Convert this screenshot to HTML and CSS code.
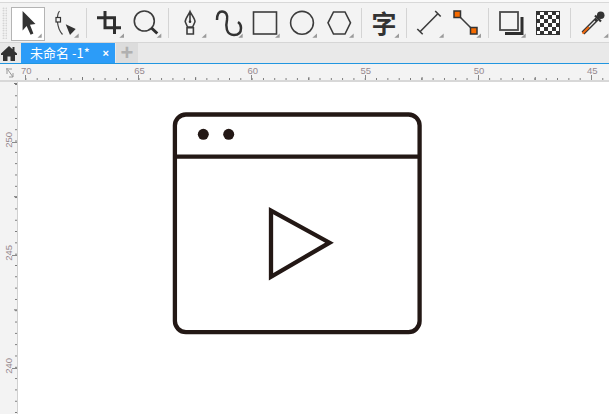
FILE: index.html
```html
<!DOCTYPE html>
<html lang="zh">
<head>
<meta charset="utf-8">
<title>未命名 -1</title>
<link rel="stylesheet" href="styles.css">
</head>
<body>
<div class="app">
  <div class="toolbar">
    <div class="grip"></div>
    <div class="tool tool-active">
      <svg viewBox="8 4 37 36"><path class="fill" d="M22.6 11V30.5L26.6 26L30.6 34.8L33.4 33.4L30 24.8L35.5 24Z"/><path class="tri" d="M37.5 37.7H41.7V33.5Z"/></svg>
    </div>
    <div class="tool">
      <svg viewBox="45 4 37 36"><path class="thin" d="M59.5 11C56.5 15 56 27 62.5 34.5"/><rect class="node" x="56" y="17.5" width="4.5" height="4.5"/><path class="fill" d="M65.7 24.3L75.7 29L70 35Z"/><path class="tri" d="M74 37.7H78.7V33.5Z"/></svg>
    </div>
    <div class="sep"></div>
    <div class="tool">
      <svg viewBox="90 4 37 36"><path class="bold" d="M97 17.8H114.5V34M105 11V27.8H121"/><path class="tri" d="M119.3 37.7H124V33.5Z"/></svg>
    </div>
    <div class="tool">
      <svg viewBox="127 4 37 36"><circle class="line" cx="144.3" cy="21" r="10"/><path class="bold" d="M151.5 28L157.3 33.5"/><path class="tri" d="M156.7 37.7H161.3V33.5Z"/></svg>
    </div>
    <div class="sep"></div>
    <div class="tool">
      <svg viewBox="172 4 37 36"><path class="line" d="M190 11.5C188.5 15 185.2 18.5 185.2 21.7L187.5 27H192.7L195 21.7C195 18.5 191.5 15 190 11.5ZM190 13V21M187 27.7H193.4V34H187Z"/><circle class="fill" cx="190" cy="21.8" r="1.3"/><path class="tri" d="M201.7 37.7H206.3V33.5Z"/></svg>
    </div>
    <div class="tool">
      <svg viewBox="209 4 37 36"><path class="curve" d="M217 20C217 14 219 11.5 222 11.5C226 11.5 228 15 227 20C225.5 26 226 35 234 35C239 35 241 32 241 28C241 25 239.5 23 238 22"/><path class="tri" d="M238.3 37.7H242.7V33.5Z"/></svg>
    </div>
    <div class="tool">
      <svg viewBox="246 4 37 36"><rect class="line" x="253.5" y="12" width="23" height="22"/><path class="tri" d="M275 37.7H279.7V33.5Z"/></svg>
    </div>
    <div class="tool">
      <svg viewBox="283 4 37 36"><circle class="line" cx="302" cy="22.8" r="11.4"/><path class="tri" d="M312.3 37.7H317V33.5Z"/></svg>
    </div>
    <div class="tool">
      <svg viewBox="320 4 37 36"><path class="line" d="M333.5 12H345L350.5 22.8L345 34H333.5L328 22.8Z"/><path class="tri" d="M349 37.7H353.7V33.5Z"/></svg>
    </div>
    <div class="sep"></div>
    <div class="tool tool-text">
      <span class="glyph">字</span>
      <svg class="over" viewBox="365 4 37 36"><path class="tri" d="M394.3 37.7H399V33.5Z"/></svg>
    </div>
    <div class="sep"></div>
    <div class="tool">
      <svg viewBox="410 4 37 36"><path class="line" d="M420 31.7L438.3 13.3M417.3 29L422.7 34.3M435.2 11L440.7 16.5"/><path class="tri" d="M439 37.7H443.7V33.5Z"/></svg>
    </div>
    <div class="tool">
      <svg viewBox="447 4 37 36"><path class="line" d="M458 15L474 31"/><rect class="handle" x="454" y="11" width="6.5" height="6.5"/><rect class="handle" x="470.5" y="27.5" width="6.5" height="6.5"/><path class="tri" d="M476.3 37.7H481V33.5Z"/></svg>
    </div>
    <div class="sep"></div>
    <div class="tool">
      <svg viewBox="492 4 37 36"><rect class="box" x="500" y="12" width="18" height="18"/><path class="bold" d="M505 33.5H522V17"/><path class="tri" d="M521 37.7H525.7V33.5Z"/></svg>
    </div>
    <div class="tool">
      <svg viewBox="529 4 37 36">
        <defs><pattern id="check" x="536" y="11" width="8" height="8" patternUnits="userSpaceOnUse"><rect width="8" height="8" fill="#333"/><rect x="4" width="4" height="4" fill="#fff"/><rect y="4" width="4" height="4" fill="#fff"/></pattern></defs>
        <rect class="frame" x="536.5" y="11.5" width="23" height="23" fill="url(#check)"/>
      </svg>
    </div>
    <div class="sep"></div>
    <div class="tool">
      <svg viewBox="574 4 37 36"><path class="dropper" d="M583 33L597 19"/><path class="tip" d="M582.5 33.5L589 27"/><path class="core" d="M589 27L595 21"/><circle class="fill" cx="600.7" cy="15.2" r="3.8"/><path class="mid" d="M595 15.5L601 21.5"/><path class="tri" d="M603.5 37.7H608.3V33.5Z"/></svg>
    </div>
  </div>

  <div class="tabbar">
    <div class="home">
      <svg viewBox="0 0 16 15"><path class="fill" d="M8 0L0 7.5V9H2V15H6.5V10.5H9.5V15H14V9H16V7.5L13.5 5.2V1H11.5V3.3Z"/></svg>
    </div>
    <div class="tab"><span>未命名 -1*</span><span class="close">×</span></div>
    <div class="add">+</div>
  </div>

  <div class="ruler-top">
    <div class="corner">
      <svg viewBox="0 0 8 10"><path class="corner-mark" d="M1 0V6M0 1H6M2 2L7 9M7 5V9H3"/></svg>
    </div>
    <div class="scale-x">
      <div class="mark-x"><span>70</span></div>
      <div class="mark-x"><span>65</span></div>
      <div class="mark-x"><span>60</span></div>
      <div class="mark-x"><span>55</span></div>
      <div class="mark-x"><span>50</span></div>
      <div class="mark-x"><span>45</span></div>
    </div>
  </div>

  <div class="workspace">
    <div class="scale-y">
      <div class="mark-y"><span>250</span></div>
      <div class="mark-y"><span>245</span></div>
      <div class="mark-y"><span>240</span></div>
    </div>
    <div class="canvas">
      <svg class="artwork" viewBox="172 111 252 225">
        <rect class="art" x="174.9" y="114.5" width="244.7" height="217.6" rx="11"/>
        <path class="art" d="M175 156.7H419.5"/>
        <circle class="art-dot" cx="203.3" cy="134.3" r="5.5"/>
        <circle class="art-dot" cx="228.7" cy="134.3" r="5.5"/>
        <path class="art" d="M271 210.6L329.5 242.7L271 276.8Z"/>
      </svg>
    </div>
  </div>
</div>
</body>
</html>
```
FILE: styles.css
```css
* { box-sizing: border-box; }
html, body { margin: 0; padding: 0; height: 100%; overflow: hidden; }
body { background: #fff; font-family: "Liberation Sans", "Noto Sans CJK SC", sans-serif; }
.app { width: 609px; height: 414px; display: flex; flex-direction: column; overflow: hidden; }

.toolbar {
  height: 43px; flex: none; display: flex; align-items: flex-start;
  padding: 2px 0 0 0; background: #f3f3f3;
  border-top: 2px solid #f9f9f9; box-shadow: inset 0 1px 0 #d8d8d8;
  border-bottom: 1px solid #d6d6d6;
}
.grip {
  width: 8px; height: 32px; flex: none; margin-top: 3px;
  background-image: radial-gradient(circle, #c4c4c4 0.7px, transparent 0.9px);
  background-size: 2.5px 2.5px; background-clip: content-box;
  padding-left: 2px; padding-right: 1px;
}
.tool { width: 37px; height: 36px; flex: none; position: relative; }
.tool svg { display: block; width: 37px; height: 36px; overflow: visible; }
.tool-active::before {
  content: ""; position: absolute; left: 3px; top: 3px; width: 32px; height: 32px;
  background: #fff; border: 1px solid #b4b4b4;
}
.tool-active svg { position: relative; }
.sep { width: 1px; height: 30px; flex: none; margin: 4px 3px 0 4px; background: #d4d4d4; }
.tool-text { display: flex; justify-content: center; }
.glyph {
  font-family: "Noto Sans CJK SC", sans-serif; font-weight: 700; font-size: 25px;
  line-height: 36px; color: #333; margin-left: 1px;
}
.tool svg.over { position: absolute; left: 0; top: 0; }

.fill { fill: #333; }
.tri { fill: #9a9a9a; }
.thin { fill: none; stroke: #444; stroke-width: 1.2; }
.line { fill: none; stroke: #3c3c3c; stroke-width: 1.6; }
.box { fill: none; stroke: #4a4a4a; stroke-width: 1.8; }
.mid { fill: none; stroke: #333; stroke-width: 2.2; }
.curve { fill: none; stroke: #333; stroke-width: 2.5; }
.bold { fill: none; stroke: #2e2e2e; stroke-width: 3; }
.node { fill: #f3f3f3; stroke: #333; stroke-width: 1.2; }
.handle { fill: #f76b00; stroke: #333; stroke-width: 1.5; }
.frame { stroke: #333; stroke-width: 1; }
.dropper { fill: none; stroke: #333; stroke-width: 4; }
.tip { fill: none; stroke: #f06a10; stroke-width: 2; }
.core { fill: none; stroke: #e8e8e8; stroke-width: 1.2; }

.tabbar {
  height: 21px; flex: none; display: flex; align-items: stretch;
  background: #e9e9e9; border-bottom: 1px solid #2196e0;
}
.home { width: 21px; flex: none; padding: 3px 0 0 1px; }
.home svg { display: block; width: 16px; height: 15px; }
.tab {
  width: 94px; flex: none; display: flex; justify-content: space-between; align-items: center;
  padding: 0 6px 1px 9px; background: #2c9cf8; color: #fff; font-size: 13px;
  font-family: "Noto Sans CJK SC", "Liberation Sans", sans-serif;
}
.close { font-family: "Liberation Sans", sans-serif; font-weight: 700; font-size: 11px; }
.add {
  width: 22px; flex: none; margin-left: 1px; background: #dcdcdc; color: #b0b0b0;
  font-size: 22px; font-weight: 700; line-height: 19px; text-align: center;
}

.ruler-top { height: 18px; flex: none; display: flex; background: #f3f3f3; border-bottom: 2px solid #d8d8d8; }
.corner { width: 17px; flex: none; padding: 4px 0 0 6px; }
.corner svg { display: block; width: 8px; height: 10px; }
.corner-mark { fill: none; stroke: #999; stroke-width: 1; }
.scale-x {
  flex: 1; display: flex; padding-left: 8px; overflow: hidden;
  background-image:
    linear-gradient(to right, #777 1px, transparent 1px),
    linear-gradient(to right, #777 1px, transparent 1px);
  background-size: 11.32px 2px, 113.2px 3px;
  background-position: 8.4px 14px, 65px 13px;
  background-repeat: repeat-x;
}
.mark-x {
  width: 113.2px; flex: none; height: 16px;
  background: linear-gradient(#888, #888) 0 11px / 1px 5px no-repeat;
}
.mark-x span {
  display: block; margin-left: -4px; padding-top: 1px; font-size: 9.5px; line-height: 11px; color: #96898f;
}

.workspace { flex: 1; display: flex; min-height: 0; }
.scale-y {
  width: 17px; flex: none; background: #f3f3f3; padding-top: 60px; overflow: hidden;
  background-image:
    linear-gradient(#777 1px, transparent 1px),
    linear-gradient(#777 1px, transparent 1px);
  background-size: 2px 11.32px, 3px 113.2px;
  background-position: 15px 2px, 14px 1px;
  background-repeat: repeat-y;
}
.mark-y {
  height: 113.2px; position: relative;
  background: linear-gradient(#888, #888) 12px 0 / 5px 1px no-repeat;
}
.mark-y span {
  position: absolute; left: 4px; bottom: 107.5px;
  writing-mode: vertical-rl; transform: rotate(180deg);
  font-size: 9.5px; line-height: 9px; color: #96898f;
}
.canvas { flex: 1; background: #fff; border-left: 1px solid #d0d0d0; padding: 29px 0 0 154px; }
.artwork { display: block; width: 252px; height: 225px; }
.art { fill: none; stroke: #231815; stroke-width: 4.3; stroke-miterlimit: 10; }
.art-dot { fill: #231815; }
```
